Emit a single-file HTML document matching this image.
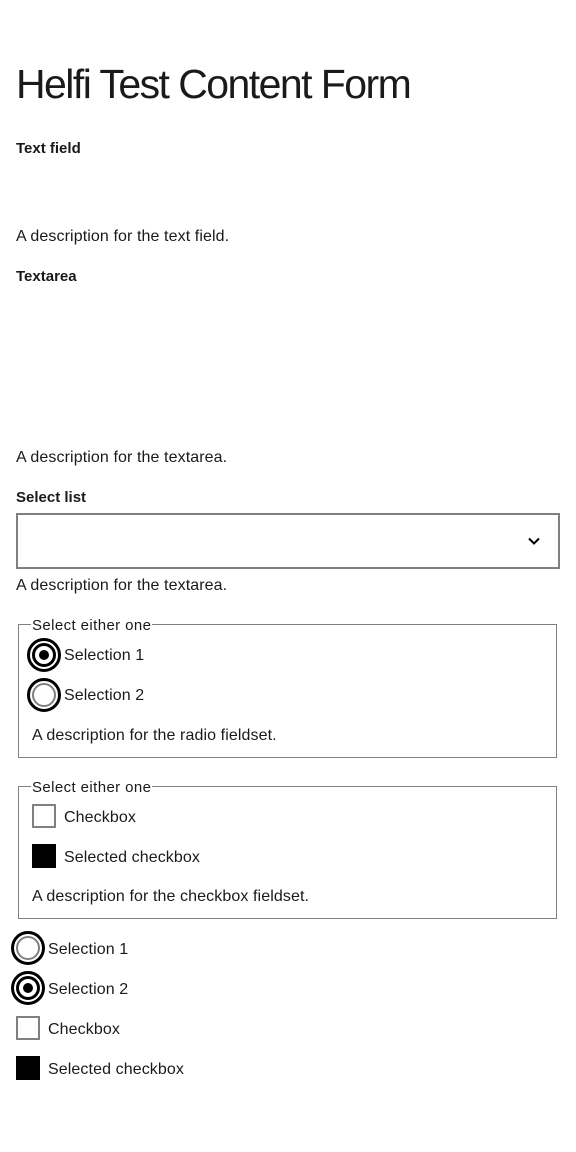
<!DOCTYPE html>
<html><head><meta charset="utf-8"><style>
body{margin:0;width:576px;height:1152px;background:#fff;font-family:"Liberation Sans",sans-serif;color:#1a1a1a;position:relative;overflow:hidden}
.a{position:absolute;white-space:nowrap;line-height:1}
.t{font-size:16px;letter-spacing:0.1px;margin-top:1px}
.b{font-size:15px;font-weight:bold;letter-spacing:0px;margin-top:1px}
h1{position:absolute;left:16px;top:64px;margin:0;font-size:41px;font-weight:normal;letter-spacing:-1.55px;line-height:1;color:#1a1a1a}
.fs{position:absolute;left:18px;width:539px;border:1px solid #808080;box-sizing:border-box}
.lg{position:absolute;background:#fff;font-size:15px;line-height:1;padding:0 1px;letter-spacing:0.4px;margin-top:1px}
.r{position:absolute;width:34px;height:34px;box-sizing:border-box;border-radius:50%;border:3px solid #000;background:#fff}
.r.off::after{content:"";position:absolute;left:2px;top:2px;width:24px;height:24px;box-sizing:border-box;border-radius:50%;border:2px solid #808080}
.r.on::after{content:"";position:absolute;left:2px;top:2px;width:24px;height:24px;box-sizing:border-box;border-radius:50%;border:3px solid #000}
.r.on::before{content:"";position:absolute;left:9px;top:9px;width:10px;height:10px;border-radius:50%;background:#000}
.c{position:absolute;width:24px;height:24px;box-sizing:border-box;border:2px solid #808080;background:#fff}
.c.on{background:#000;border-color:#000}
</style></head><body>
<h1>Helfi Test Content Form</h1>
<div class="a b" style="left:16px;top:140px">Text field</div>
<div class="a t" style="left:16px;top:228px">A description for the text field.</div>
<div class="a b" style="left:16px;top:268px">Textarea</div>
<div class="a t" style="left:16px;top:449px">A description for the textarea.</div>
<div class="a b" style="left:16px;top:489px">Select list</div>
<div style="position:absolute;left:16px;top:513px;width:544px;height:56px;box-sizing:border-box;border:2px solid #808080"></div>
<svg style="position:absolute;left:527px;top:535px" width="14" height="12" viewBox="0 0 14 12"><path d="M2 3.5 L7 8.5 L12 3.5" fill="none" stroke="#000" stroke-width="2"/></svg>
<div class="a t" style="left:16px;top:577px">A description for the textarea.</div>

<div class="fs" style="top:624px;height:134px"></div>
<div class="lg" style="left:31px;top:617px">Select either one</div>
<div class="r on" style="left:27px;top:638px"></div>
<div class="a t" style="left:64px;top:647px">Selection 1</div>
<div class="r off" style="left:27px;top:678px"></div>
<div class="a t" style="left:64px;top:687px">Selection 2</div>
<div class="a t" style="left:32px;top:727px">A description for the radio fieldset.</div>

<div class="fs" style="top:786px;height:133px"></div>
<div class="lg" style="left:31px;top:779px">Select either one</div>
<div class="c" style="left:32px;top:804px"></div>
<div class="a t" style="left:64px;top:809px">Checkbox</div>
<div class="c on" style="left:32px;top:844px"></div>
<div class="a t" style="left:64px;top:849px">Selected checkbox</div>
<div class="a t" style="left:32px;top:888px">A description for the checkbox fieldset.</div>

<div class="r off" style="left:11px;top:931px"></div>
<div class="a t" style="left:48px;top:941px">Selection 1</div>
<div class="r on" style="left:11px;top:971px"></div>
<div class="a t" style="left:48px;top:981px">Selection 2</div>
<div class="c" style="left:16px;top:1016px"></div>
<div class="a t" style="left:48px;top:1021px">Checkbox</div>
<div class="c on" style="left:16px;top:1056px"></div>
<div class="a t" style="left:48px;top:1061px">Selected checkbox</div>
</body></html>
